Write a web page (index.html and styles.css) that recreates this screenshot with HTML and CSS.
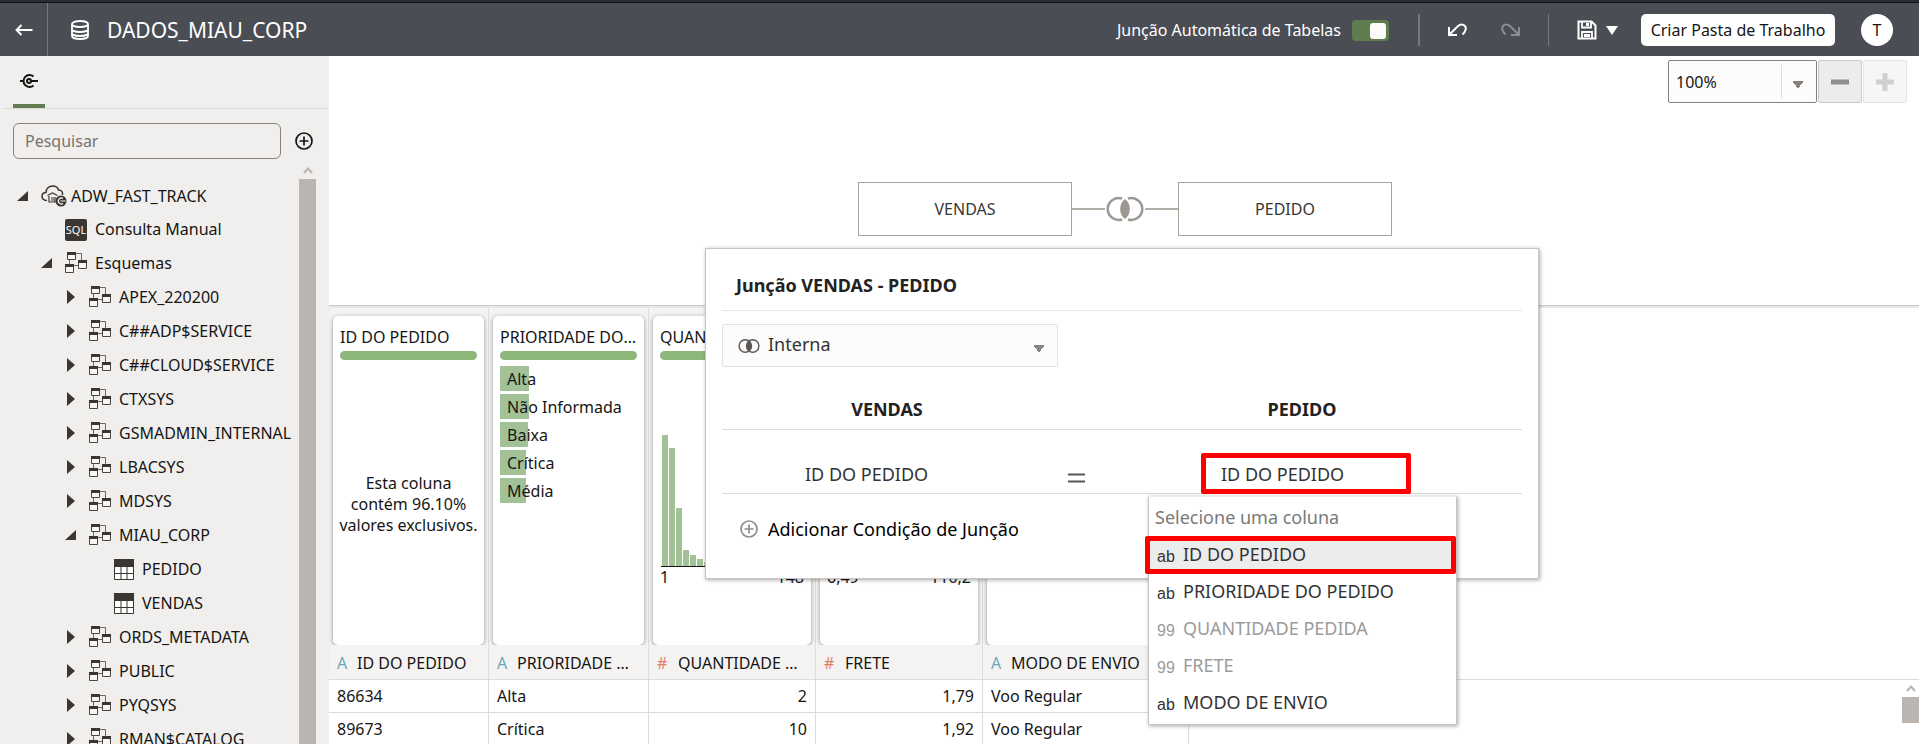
FILE: index.html
```html
<!DOCTYPE html>
<html lang="pt-BR">
<head>
<meta charset="utf-8">
<title>DADOS_MIAU_CORP</title>
<link rel="stylesheet" href="styles.css">
</head>
<body>
<svg class="sprite" aria-hidden="true">
  <symbol id="schema" viewBox="0 0 22 22">
    <path d="M11 1.500h5.500v7M4.500 12V8M13 13.500H9" fill="none" stroke="#6b6864"/>
    <path d="M2.500.500h8v7h-8zM.500 12.500h8v8h-8zM13.500 8.500h8v8h-8z" fill="#f7f6f4" stroke="#4a4743"/>
    <path d="M2 0h9v3H2zM0 12h9v3H0zM13 8h9v3h-9z" fill="#3a3632"/>
  </symbol>
  <symbol id="table" viewBox="0 0 20 21">
    <path d="M.500.500h19v20H.500zM1 14.500h18M7 8v13M13 8v13" fill="#fff" stroke="#3a3632"/>
    <path d="M0 0h20v8H0z" fill="#3a3632"/>
  </symbol>
  <symbol id="closed" viewBox="0 0 12 14"><path d="M2 0v14l8-7z" fill="#3a3632"/></symbol>
  <symbol id="opened" viewBox="0 0 12 12"><path d="M11 1v10H0z" fill="#3a3632"/></symbol>
  <symbol id="chevron" viewBox="0 0 10 7"><path d="M1 6l4-4.500L9 6" fill="none" stroke="#bab5b1" stroke-width="2"/></symbol>
  <symbol id="plus-circle" viewBox="0 0 18 18">
    <circle cx="9" cy="9" r="8" fill="none" stroke="currentColor" stroke-width="1.700"/>
    <path d="M9 4.500v9M4.500 9h9" stroke="currentColor" stroke-width="1.700"/>
  </symbol>
</svg>

<header class="topbar">
  <button class="icon-btn back" aria-label="Voltar">
    <svg width="18" height="12" viewBox="0 0 18 12"><path d="M17.500 6H1.500M6.500 1L1.500 6l5 5" fill="none" stroke="#fff" stroke-width="1.900"/></svg>
  </button>
  <svg class="db" width="20" height="20" viewBox="0 0 20 20"><g fill="none" stroke="#fff" stroke-width="1.800"><ellipse cx="10" cy="4" rx="8" ry="3"/><path d="M2 4v12c0 1.700 3.600 3 8 3s8-1.300 8-3V4M2 9c0 1.700 3.600 3 8 3s8-1.300 8-3M2 13c0 1.700 3.600 3 8 3s8-1.300 8-3"/></g></svg>
  <h1 class="title">DADOS_MIAU_CORP</h1>
  <label class="auto" for="auto-join">Junção Automática de Tabelas</label>
  <input class="switch" type="checkbox" role="switch" id="auto-join" checked>
  <div class="history">
    <button class="icon-btn" aria-label="Desfazer">
      <svg width="20" height="14" viewBox="0 0 20 14"><path d="M2 4v8h8M2 12L10 4c4-4.500 10-2 8.500 3-.500 2-1.500 3-3 4.500" fill="none" stroke="#fff" stroke-width="2"/></svg>
    </button>
    <button class="icon-btn" aria-label="Refazer" disabled>
      <svg width="20" height="14" viewBox="0 0 20 14"><path d="M18 4v8h-8M18 12L10 4C6-.500 0 2 1.500 7c.500 2 1.500 3 3 4.500" fill="none" stroke="#8b8d90" stroke-width="2"/></svg>
    </button>
  </div>
  <button class="icon-btn save" aria-label="Salvar">
    <svg width="20" height="20" viewBox="0 0 20 20"><path d="M1.500 1.500h13l4 4v13h-17z" fill="none" stroke="#fff" stroke-width="2"/><path d="M5 1.500v6h9v-6M5 18v-6h10v6" fill="none" stroke="#fff" stroke-width="1.800"/><path d="M9 3h3v3H9zM7 14h6v3H7z" fill="#fff"/></svg>
    <svg width="12" height="9" viewBox="0 0 12 9"><path d="M0 0h12L6 9z" fill="#fff"/></svg>
  </button>
  <button class="create">Criar Pasta de Trabalho</button>
  <button class="avatar" aria-label="Conta">T</button>
</header>

<div class="app">
  <aside class="sidebar">
    <nav class="tabs">
      <button class="tab" aria-label="Conexões">
        <svg width="18" height="16" viewBox="0 0 18 16"><path d="M13.500 3.500A6 6 0 1 0 13.500 12.500M0 8h3.500M10 8h8" fill="none" stroke="#161513" stroke-width="2"/><circle cx="9" cy="8" r="2" fill="none" stroke="#161513" stroke-width="2"/></svg>
      </button>
    </nav>
    <div class="search">
      <input class="search-box" type="text" placeholder="Pesquisar" aria-label="Pesquisar">
      <button class="icon-btn add" aria-label="Adicionar"><svg width="18" height="18"><use href="#plus-circle"/></svg></button>
    </div>
    <div class="tree-wrap">
      <ul class="tree">
        <li class="node l0"><svg class="tw" width="12" height="12"><use href="#opened"/></svg>
          <svg class="cloud" width="26" height="22" viewBox="0 0 26 22"><path d="M6 15.500C2 15.500.800 13 1 11c.200-2 2-3.500 4-3.500C5 3.500 8 1 11.500 1S17 3 17.500 5c3 0 4.500 2 4 5" fill="none" stroke="#3a3632" stroke-width="1.500"/><path d="M6.500 10.500l5-2.500 5 2.500M8 11v6h6v-5M10 13h3M10 15h3" fill="none" stroke="#3a3632" stroke-width="1.200"/><circle cx="20" cy="16" r="5.500" fill="#3a3632"/><path d="M22 13.500a3 3 0 1 0 0 5M19.500 16h5" fill="none" stroke="#fff" stroke-width="1.200"/></svg>
          <span>ADW_FAST_TRACK</span></li>
        <li class="node l1 query"><span class="sql">SQL</span><span>Consulta Manual</span></li>
        <li class="node l1 open"><svg class="tw" width="12" height="12"><use href="#opened"/></svg><svg class="ic" width="22" height="22"><use href="#schema"/></svg><span>Esquemas</span></li>
        <li class="node l2"><svg class="tw" width="12" height="14"><use href="#closed"/></svg><svg class="ic" width="22" height="22"><use href="#schema"/></svg><span>APEX_220200</span></li>
        <li class="node l2"><svg class="tw" width="12" height="14"><use href="#closed"/></svg><svg class="ic" width="22" height="22"><use href="#schema"/></svg><span>C##ADP$SERVICE</span></li>
        <li class="node l2"><svg class="tw" width="12" height="14"><use href="#closed"/></svg><svg class="ic" width="22" height="22"><use href="#schema"/></svg><span>C##CLOUD$SERVICE</span></li>
        <li class="node l2"><svg class="tw" width="12" height="14"><use href="#closed"/></svg><svg class="ic" width="22" height="22"><use href="#schema"/></svg><span>CTXSYS</span></li>
        <li class="node l2"><svg class="tw" width="12" height="14"><use href="#closed"/></svg><svg class="ic" width="22" height="22"><use href="#schema"/></svg><span>GSMADMIN_INTERNAL</span></li>
        <li class="node l2"><svg class="tw" width="12" height="14"><use href="#closed"/></svg><svg class="ic" width="22" height="22"><use href="#schema"/></svg><span>LBACSYS</span></li>
        <li class="node l2"><svg class="tw" width="12" height="14"><use href="#closed"/></svg><svg class="ic" width="22" height="22"><use href="#schema"/></svg><span>MDSYS</span></li>
        <li class="node l2"><svg class="tw" width="12" height="12"><use href="#opened"/></svg><svg class="ic" width="22" height="22"><use href="#schema"/></svg><span>MIAU_CORP</span></li>
        <li class="node l3"><svg class="ic" width="20" height="21"><use href="#table"/></svg><span>PEDIDO</span></li>
        <li class="node l3"><svg class="ic" width="20" height="21"><use href="#table"/></svg><span>VENDAS</span></li>
        <li class="node l2"><svg class="tw" width="12" height="14"><use href="#closed"/></svg><svg class="ic" width="22" height="22"><use href="#schema"/></svg><span>ORDS_METADATA</span></li>
        <li class="node l2"><svg class="tw" width="12" height="14"><use href="#closed"/></svg><svg class="ic" width="22" height="22"><use href="#schema"/></svg><span>PUBLIC</span></li>
        <li class="node l2"><svg class="tw" width="12" height="14"><use href="#closed"/></svg><svg class="ic" width="22" height="22"><use href="#schema"/></svg><span>PYQSYS</span></li>
        <li class="node l2"><svg class="tw" width="12" height="14"><use href="#closed"/></svg><svg class="ic" width="22" height="22"><use href="#schema"/></svg><span>RMAN$CATALOG</span></li>
      </ul>
      <div class="scroll"><svg width="10" height="7"><use href="#chevron"/></svg><div class="thumb"></div></div>
    </div>
  </aside>

  <main class="main">
    <section class="canvas">
      <div class="zoom">
        <select class="zoom-select" aria-label="Zoom"><option>100%</option></select>
        <button class="zoom-btn" aria-label="Diminuir"><svg width="18" height="18" viewBox="0 0 18 18"><path d="M0 9h18" stroke="#8b8f91" stroke-width="5"/></svg></button>
        <button class="zoom-btn" aria-label="Aumentar" disabled><svg width="18" height="18" viewBox="0 0 18 18"><path d="M0 9h18M9 0v18" stroke="#cfd1d1" stroke-width="5"/></svg></button>
      </div>
      <div class="diagram">
        <div class="entity">VENDAS</div>
        <div class="link"></div>
        <svg class="join" width="40" height="26" viewBox="0 0 40 26"><path d="M17 2.500A11 11 0 1 0 17 23.500M23 2.500A11 11 0 1 1 23 23.500" fill="none" stroke="#9e9892" stroke-width="2.500"/><path d="M20 3c6.500 5 6.500 15 0 20c-6.500-5-6.500-15 0-20z" fill="#9e9892"/></svg>
        <div class="link"></div>
        <div class="entity">PEDIDO</div>
      </div>
    </section>

    <section class="preview">
      <table class="grid">
        <colgroup><col class="c-id"><col class="c-id"><col class="c-num"><col class="c-num"><col class="c-mode"></colgroup>
        <thead>
          <tr class="profile">
            <td><div class="card"><div class="card-title">ID DO PEDIDO</div><div class="quality"></div><p class="note">Esta coluna contém 96.10% valores exclusivos.</p></div></td>
            <td><div class="card"><div class="card-title">PRIORIDADE DO PEDIDO</div><div class="quality"></div>
              <ul class="cats">
                <li class="cat"><i class="fill" style="width:29px"></i>Alta</li>
                <li class="cat"><i class="fill" style="width:29px"></i>Não Informada</li>
                <li class="cat"><i class="fill" style="width:28px"></i>Baixa</li>
                <li class="cat"><i class="fill" style="width:26px"></i>Crítica</li>
                <li class="cat"><i class="fill" style="width:26px"></i>Média</li>
              </ul></div></td>
            <td><div class="card"><div class="card-title">QUANTIDADE PEDIDA</div><div class="quality"></div>
              <div class="histo"><i style="height:131px"></i><i style="height:118px"></i><i style="height:58px"></i><i style="height:16px"></i><i style="height:11px"></i><i style="height:7px"></i><i style="height:4px"></i></div>
              <div class="axis"><span>1</span><span>148</span></div></div></td>
            <td><div class="card"><div class="card-title">FRETE</div><div class="quality"></div>
              <div class="histo"></div>
              <div class="axis"><span>6,49</span><span>110,2</span></div></div></td>
            <td><div class="card"><div class="card-title">MODO DE ENVIO</div><div class="quality"></div></div></td>
          </tr>
          <tr class="heads">
            <th><div class="head"><b class="text">A</b><span>ID DO PEDIDO</span></div></th>
            <th><div class="head"><b class="text">A</b><span>PRIORIDADE DO PEDIDO</span></div></th>
            <th><div class="head"><b class="num">#</b><span>QUANTIDADE PEDIDA</span></div></th>
            <th><div class="head"><b class="num">#</b><span>FRETE</span></div></th>
            <th><div class="head"><b class="text">A</b><span>MODO DE ENVIO</span></div></th>
          </tr>
        </thead>
        <tbody>
          <tr><td>86634</td><td>Alta</td><td class="r">2</td><td class="r">1,79</td><td>Voo Regular</td></tr>
          <tr><td>89673</td><td>Crítica</td><td class="r">10</td><td class="r">1,92</td><td>Voo Regular</td></tr>
        </tbody>
      </table>
      <div class="rest">
        <div class="rest-top"></div>
        <div class="rest-scroll"><svg width="10" height="7"><use href="#chevron"/></svg><div class="rest-thumb"></div></div>
      </div>
    </section>

    <section class="dialog" role="dialog" aria-labelledby="dlg-title">
      <h2 class="dlg-title" id="dlg-title">Junção VENDAS - PEDIDO</h2>
      <div class="join-type">
        <svg width="22" height="14" viewBox="0 0 22 14"><g fill="none" stroke="#5b5651" stroke-width="1.400"><circle cx="7.300" cy="7" r="6.200"/><circle cx="14.700" cy="7" r="6.200"/></g><path d="M11 2c3 3 3 7 0 10c-3-3-3-7 0-10z" fill="#5b5651"/></svg>
        <select class="join-select" aria-label="Tipo de junção"><option>Interna</option></select>
      </div>
      <div class="cols heading"><span>VENDAS</span><span></span><span>PEDIDO</span></div>
      <div class="cols cond">
        <select class="col-select" aria-label="Coluna de VENDAS"><option>ID DO PEDIDO</option></select>
        <svg class="eq" width="18" height="10" viewBox="0 0 18 10"><path d="M0 1.500h17M0 8.500h17" stroke="#5b5651" stroke-width="2"/></svg>
        <select class="col-select marked" aria-label="Coluna de PEDIDO"><option>ID DO PEDIDO</option></select>
      </div>
      <button class="add-cond"><svg width="18" height="18"><use href="#plus-circle"/></svg>Adicionar Condição de Junção</button>
      <ul class="menu" role="listbox" aria-label="Selecione uma coluna">
        <li class="menu-head">Selecione uma coluna</li>
        <li class="opt picked" role="option" aria-selected="true"><small>ab</small>ID DO PEDIDO</li>
        <li class="opt" role="option"><small>ab</small>PRIORIDADE DO PEDIDO</li>
        <li class="opt off" role="option" aria-disabled="true"><small>99</small>QUANTIDADE PEDIDA</li>
        <li class="opt off" role="option" aria-disabled="true"><small>99</small>FRETE</li>
        <li class="opt" role="option"><small>ab</small>MODO DE ENVIO</li>
      </ul>
    </section>
  </main>
</div>
</body>
</html>
```
FILE: styles.css
```css
* { box-sizing: border-box; }
body {
  margin: 0;
  height: 100vh;
  overflow: hidden;
  display: flex;
  flex-direction: column;
  background: #fff;
  color: #161513;
  font: 16px/21px "Noto Sans", "Open Sans", sans-serif;
}
ul { list-style: none; margin: 0; padding: 0; }
button, input, select { font: inherit; color: inherit; margin: 0; }
svg { flex: none; display: block; }
.sprite { position: absolute; width: 0; height: 0; }
.icon-btn { border: 0; background: none; padding: 0; display: flex; align-items: center; justify-content: center; }

/* top bar */
.topbar {
  flex: none;
  height: 56px;
  display: flex;
  align-items: center;
  padding: 2px 26px 0 0;
  background: #4a4d54;
  border-top: 2px solid #2b2c33;
  box-shadow: inset 0 1px #111;
  color: #fff;
}
.back { width: 48px; height: 53px; align-self: flex-end; border-right: 1px solid #76787d; }
.db { margin-left: 22px; }
.title { margin: 0 auto 0 17px; font-size: 21px; font-weight: 400; line-height: 28px; }
.switch {
  appearance: none;
  width: 37px;
  height: 21px;
  margin: 0 29px 0 11px;
  padding: 3px;
  border-radius: 4px;
  background: #5f7d4f;
  display: flex;
  justify-content: flex-end;
}
.switch::before { content: ""; width: 16px; height: 16px; border-radius: 3px; background: #fcfbfa; }
.history {
  height: 32px;
  display: flex;
  align-items: center;
  gap: 34px;
  padding: 0 27px;
  border-left: 2px solid #76787d;
  border-right: 1px solid #76787d;
}
.save { gap: 9px; margin: 0 23px 0 28px; }
.create { width: 194px; height: 32px; padding: 0; border: 0; border-radius: 5px; background: #fff; color: #161513; white-space: nowrap; }
.avatar { width: 32px; height: 32px; margin-left: 26px; padding: 0; border: 0; border-radius: 50%; background: #fff; color: #161513; }

.app { flex: 1; min-height: 0; display: grid; grid-template-columns: 329px 1fr; }

/* sidebar */
.sidebar { min-height: 0; background: #f0efed; display: flex; flex-direction: column; }
.tabs { flex: none; height: 53px; margin: 0 2px; padding: 0 11px; border-bottom: 1px solid #dcdad8; }
.tab { width: 32px; height: 52px; padding: 2px 0 0; border: 0; border-bottom: 4px solid #5f7d4f; background: none; display: flex; align-items: center; justify-content: center; }
.search { flex: none; display: flex; align-items: center; padding: 14px 16px 0 13px; }
.search-box { flex: 1; min-width: 0; height: 36px; padding: 0 11px; border: 1px solid #85827f; border-radius: 6px; background: #f0efed; outline: 0; }
.search-box::placeholder { color: #77736f; opacity: 1; }
.add { margin-left: 14px; }
.tree-wrap { flex: 1; min-height: 0; display: flex; overflow: hidden; }
.tree { flex: 1; min-width: 0; padding-top: 20px; }
.node { height: 34px; display: flex; align-items: center; white-space: nowrap; }
.query { height: 33px; }
.tw { margin-right: 12px; }
.ic { margin-right: 8px; }
.cloud { margin-right: 4px; }
.l0 { padding-left: 17px; }
.l1 { padding-left: 65px; }
.l1.open { padding-left: 41px; }
.l2 { padding-left: 65px; }
.l3 { padding-left: 114px; }
.sql { width: 22px; height: 22px; margin-right: 8px; border-radius: 2px; background: #3a3632; color: #fff; font-size: 11px; line-height: 22px; text-align: center; }
.scroll { flex: none; width: 17px; margin-right: 13px; padding-top: 8px; display: flex; flex-direction: column; align-items: center; gap: 5px; }
.thumb { flex: 1; width: 17px; background: #bab5b1; }

/* data-model canvas */
.main { position: relative; min-width: 0; display: flex; flex-direction: column; overflow: hidden; }
.canvas { flex: none; height: 252px; padding-top: 4px; border-bottom: 2px solid #e8e8e7; box-shadow: inset 0 -1px #c9c9c9; }
.zoom { display: flex; justify-content: flex-end; gap: 1px; padding-right: 12px; }
.zoom-select {
  appearance: none;
  width: 149px;
  height: 43px;
  padding: 2px 7px 0;
  border: 1px solid #87807b;
  border-radius: 2px;
  background:
    linear-gradient(#dedede, #dedede) 112px 50% / 1px 33px no-repeat,
    conic-gradient(from -35deg at 50% 100%, #87807b 70deg, transparent 0) 123px 20px / 12px 8px no-repeat,
    #fcfcfc;
}
.zoom-btn { width: 44px; height: 43px; padding: 0; border: 1px solid #c9c9c9; border-radius: 2px; background: #ececec; display: flex; align-items: center; justify-content: center; }
.zoom-btn:disabled { border-color: #e4e4e4; background: #f6f6f6; }
.diagram { display: flex; justify-content: center; align-items: center; margin-top: 79px; padding-left: 2px; }
.entity { width: 214px; height: 54px; border: 1px solid #a8a29d; color: #3a3632; line-height: 52px; text-align: center; }
.link { width: 33px; height: 2px; background: #b3ada7; }

/* data preview */
.preview { flex: 1; min-height: 0; display: flex; overflow: hidden; align-items: flex-start; }
.grid { flex: none; width: 860px; table-layout: fixed; border-collapse: separate; border-spacing: 0; }
.c-id { width: 160px; }
.c-num { width: 167px; }
.c-mode { width: 206px; }
.grid td, .grid th { padding: 0 8px; border-right: 1px solid #dcdcdc; border-bottom: 1px solid #dcdcdc; font-weight: 400; text-align: left; }
.grid tbody td { height: 33px; padding-top: 1px; }
.grid .r { text-align: right; }
.profile, .heads { background: #f4f3f2; }
.grid .profile td { height: 337px; padding: 8px 4px 0; border-bottom: 0; vertical-align: top; }
.card { height: 329px; padding: 10px 7px 0; border-radius: 5px; background: #fff; box-shadow: 0 1px 4px rgba(0, 0, 0, .4); display: flex; flex-direction: column; overflow: hidden; }
.card-title { flex: none; line-height: 22px; white-space: nowrap; overflow: hidden; text-overflow: ellipsis; }
.quality { flex: none; height: 9px; margin-top: 3px; border-radius: 5px; background: #8cb87c; }
.note { margin: 113px -4px 0; text-align: center; }
.cats { margin-top: 6px; display: grid; gap: 3px; }
.cat { height: 25px; display: flex; align-items: center; padding: 2px 0 0 7px; white-space: nowrap; position: relative; isolation: isolate; }
.fill { position: absolute; left: 0; top: 0; height: 25px; background: #a3c197; z-index: -1; }
.histo { flex: none; height: 207px; margin-left: 1px; display: flex; align-items: flex-end; gap: 1px; padding-left: 1px; border-bottom: 1px solid #161513; }
.histo i { width: 6px; background: #a3c197; }
.axis { display: flex; justify-content: space-between; }
.grid .heads th { height: 35px; padding-top: 2px; }
.head { display: flex; gap: 9px; white-space: nowrap; }
.head span { overflow: hidden; text-overflow: ellipsis; }
.head b { flex: none; width: 11px; font-weight: 400; }
.head .text { color: #6aa7c0; }
.head .num { color: #e07f68; width: 12px; }
.rest { flex: 1; min-width: 0; display: flex; flex-direction: column; align-items: flex-end; }
.rest-top { width: 100%; height: 372px; border-bottom: 1px solid #dcdcdc; }
.rest-scroll { width: 17px; padding-top: 5px; display: flex; flex-direction: column; align-items: center; gap: 5px; }
.rest-thumb { width: 17px; height: 26px; background: #bab5b1; }

/* join dialog */
.dialog {
  position: absolute;
  left: 376px;
  top: 192px;
  width: 834px;
  height: 331px;
  padding: 0 16px;
  background: #fff;
  border: 1px solid #c6c6c6;
  box-shadow: 1px 1px 4px rgba(0, 0, 0, .35);
  color: #333;
}
.dlg-title { margin: 0; height: 62px; padding: 22px 14px 0; border-bottom: 1px solid #e6e6e6; font-size: 18px; line-height: 28px; font-weight: 700; color: #222; }
.join-type { width: 336px; height: 43px; margin-top: 13px; padding-left: 15px; border: 1px solid #e2e2e2; border-radius: 2px; background: #fcfcfc; display: flex; align-items: center; }
.join-select {
  appearance: none;
  flex: 1;
  height: 41px;
  padding: 0 8px 2px;
  border: 0;
  font-size: 18px;
  background: conic-gradient(from -35deg at 50% 100%, #85888a 70deg, transparent 0) right 12px top 20px / 12px 8px no-repeat;
}
.cols { display: grid; grid-template-columns: 330px 50px 400px; border-bottom: 1px solid #dcdcdc; }
.heading { height: 63px; padding-top: 28px; font-size: 18px; line-height: 28px; font-weight: 700; text-align: center; color: #222; }
.cond { height: 64px; align-items: end; }
.col-select { appearance: none; width: 210px; height: 41px; padding: 4px 23px 0; border: 0; background: none; font-size: 18px; justify-self: center; }
.eq { justify-self: center; align-self: end; margin-bottom: 10px; }
.marked { padding: 2px 15px 0; border: 5px solid #f00; border-radius: 2px; margin: 0 0 -1px 8px; }
.add-cond { display: flex; align-items: center; gap: 10px; margin-top: 21px; padding: 0 18px; border: 0; background: none; font-size: 18px; line-height: 28px; color: #000; }
.add-cond svg { color: #8b8f91; }
.menu {
  position: absolute;
  left: 442px;
  top: 247px;
  width: 309px;
  padding-bottom: 2px;
  background: #fff;
  border: 1px solid #c6c6c6;
  border-top-color: #eee;
  box-shadow: 1px 1px 4px rgba(0, 0, 0, .35);
  font-size: 18px;
}
.menu-head { height: 39px; padding: 0 6px; line-height: 41px; color: #7a7a7a; }
.opt { height: 37px; padding: 0 8px 2px; display: flex; align-items: center; gap: 8px; white-space: nowrap; }
.opt small { width: 18px; padding-top: 4px; font: 16px/21px "Liberation Sans", sans-serif; }
.picked { height: 38px; margin-left: -4px; padding: 0 7px 1px; background: #ececec; border: 5px solid #f00; border-radius: 2px; }
.off { color: #9b9b9b; }
```
